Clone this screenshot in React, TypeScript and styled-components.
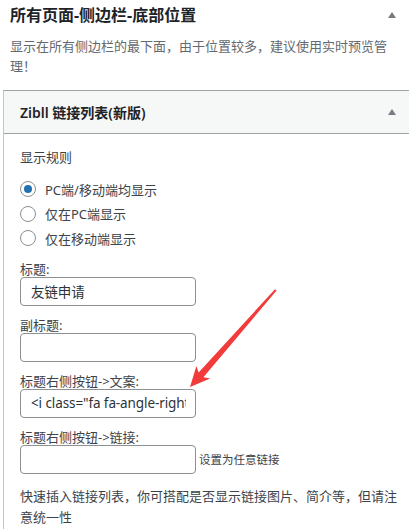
import React from 'react';
import styled, { createGlobalStyle } from 'styled-components';

const GlobalStyle = createGlobalStyle`
  html, body {
    margin: 0;
    padding: 0;
    background: #fff;
  }
  body {
    font-family: "Noto Sans", "Noto Sans CJK SC", sans-serif;
    color: #2c3338;
    overflow: hidden;
  }
`;

const Page = styled.div`
  position: relative;
  width: 409px;
  height: 529px;
  overflow: hidden;
`;

const SectionHead = styled.div`
  display: flex;
  align-items: center;
  justify-content: space-between;
  padding: 5px 13px 0 10px;
  height: 20px;
`;

const SectionTitle = styled.h2`
  margin: 0;
  font-size: 16px;
  line-height: 20px;
  font-weight: 700;
  color: #1d2327;
`;

const Caret = styled.span`
  width: 0;
  height: 0;
  border-left: 4.5px solid transparent;
  border-right: 4.5px solid transparent;
  border-bottom: 6px solid #787c82;
`;

const SectionDesc = styled.p`
  margin: 11px 10px 0 10px;
  font-size: 13px;
  line-height: 20px;
  color: #646970;
`;

const Widget = styled.div`
  margin: 14px -10px 0 3px;
  border-left: 1px solid #c3c4c7;
  border-top: 1px solid #9ea3a8;
`;

const WidgetHeader = styled.div`
  display: flex;
  align-items: center;
  justify-content: space-between;
  height: 42px;
  padding: 0 23px 0 16px;
  background: #f6f7f7;
  border-bottom: 1px solid #9ea3a8;
`;

const WidgetTitle = styled.h3`
  margin: 0;
  font-size: 14px;
  font-weight: 600;
  color: #1d2327;
`;

const WidgetBody = styled.div`
  padding: 13px 16px 20px 16px;
`;

const RuleTitle = styled.div`
  font-size: 13px;
  line-height: 20px;
  color: #3c434a;
`;

const RadioGroup = styled.div`
  display: flex;
  flex-direction: column;
  margin-top: 10px;
`;

const RadioRow = styled.label`
  display: flex;
  align-items: center;
  height: 24.5px;
  gap: 9px;
  font-size: 13px;
  color: #3c434a;
`;

const RadioDot = styled.span<{ $checked?: boolean }>`
  box-sizing: border-box;
  width: 16px;
  height: 16px;
  border-radius: 50%;
  border: 1px solid #8c8f94;
  display: flex;
  align-items: center;
  justify-content: center;
  &::after {
    content: '';
    width: 8px;
    height: 8px;
    border-radius: 50%;
    background: ${({ $checked }) => ($checked ? '#2271b1' : 'transparent')};
  }
`;

const Field = styled.div`
  margin-top: 10px;
  & + & {
    margin-top: 11px;
  }
`;

const FieldLabel = styled.div`
  font-size: 13px;
  line-height: 16px;
  color: #3c434a;
`;

const InputRow = styled.div`
  display: flex;
  align-items: center;
`;

const TextInput = styled.input`
  box-sizing: border-box;
  width: 176px;
  height: 29px;
  margin: 0;
  padding: 0 9px 0 10px;
  border: 1px solid #8c8f94;
  border-radius: 4px;
  background: #fff;
  font-family: "Noto Sans", "Noto Sans CJK SC", sans-serif;
  font-size: 13.5px;
  letter-spacing: -0.1px;
  color: #2c3338;
  outline: none;
`;

const Hint = styled.span`
  margin-left: 3px;
  font-size: 11.5px;
  color: #3c434a;
`;

const Note = styled.p`
  margin: 12px 0 0 0;
  font-size: 13px;
  line-height: 21px;
  color: #3c434a;
`;

const Overlay = styled.svg`
  position: absolute;
  left: 0;
  top: 0;
  pointer-events: none;
`;

const rules = [
  { label: 'PC端/移动端均显示', checked: true },
  { label: '仅在PC端显示', checked: false },
  { label: '仅在移动端显示', checked: false },
];

const fields = [
  { label: '标题:', value: '友链申请' },
  { label: '副标题:', value: '' },
  { label: '标题右侧按钮->文案:', value: '<i class="fa fa-angle-right"></i>' },
  { label: '标题右侧按钮->链接:', value: '', hint: '设置为任意链接' },
];

export default function App() {
  return (
    <Page>
      <GlobalStyle />
      <SectionHead>
        <SectionTitle>所有页面-侧边栏-底部位置</SectionTitle>
        <Caret />
      </SectionHead>
      <SectionDesc>显示在所有侧边栏的最下面，由于位置较多，建议使用实时预览管理！</SectionDesc>

      <Widget>
        <WidgetHeader>
          <WidgetTitle>Zibll 链接列表(新版)</WidgetTitle>
          <Caret />
        </WidgetHeader>
        <WidgetBody>
          <RuleTitle>显示规则</RuleTitle>
          <RadioGroup>
            {rules.map(r => (
              <RadioRow key={r.label}>
                <RadioDot $checked={r.checked} />
                {r.label}
              </RadioRow>
            ))}
          </RadioGroup>
          {fields.map(f => (
            <Field key={f.label}>
              <FieldLabel>{f.label}</FieldLabel>
              <InputRow>
                <TextInput defaultValue={f.value} readOnly />
                {f.hint && <Hint>{f.hint}</Hint>}
              </InputRow>
            </Field>
          ))}
          <Note>快速插入链接列表，你可搭配是否显示链接图片、简介等，但请注意统一性</Note>
        </WidgetBody>
      </Widget>

      <Overlay width="409" height="529" viewBox="0 0 409 529">
        <polygon
          points="190,387 196.4,366 198.6,372.6 275,289.2 276.6,290.6 203.4,377.2 210.2,378.4"
          fill="#f23b3b"
        />
      </Overlay>
    </Page>
  );
}
